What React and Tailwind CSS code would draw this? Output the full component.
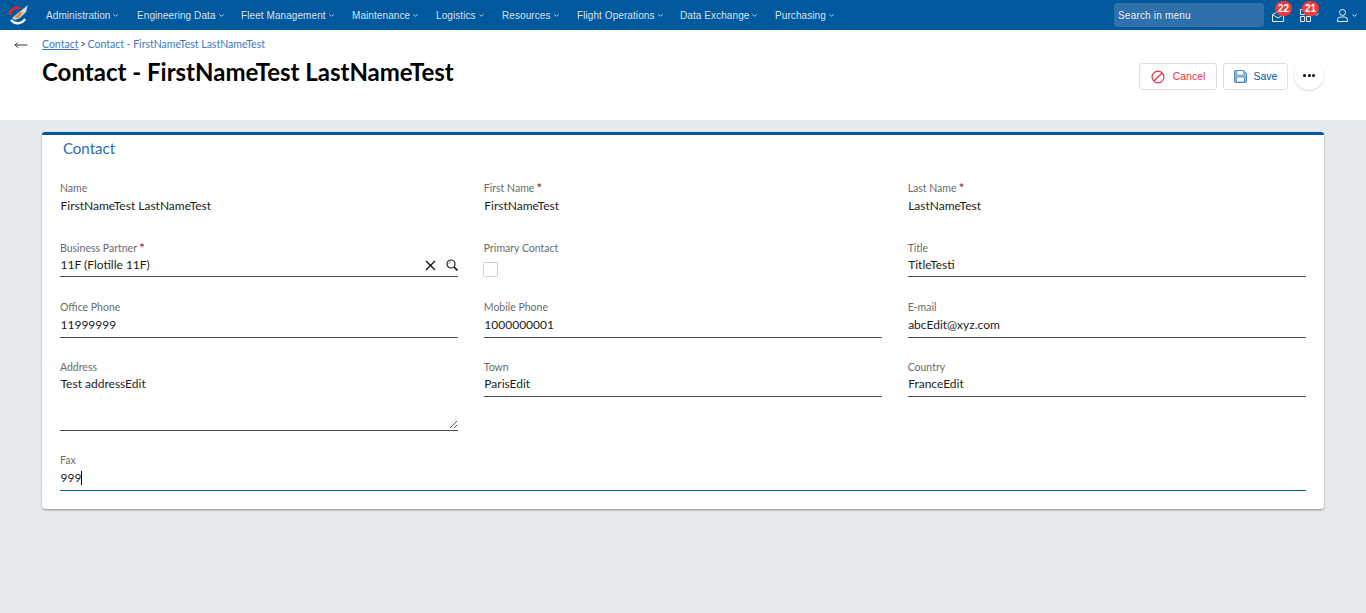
import React from "react";
import { ChevronDown, MoveLeft } from "lucide-react";

const menus = [
  ["Administration", "w-[91px]"],
  ["Engineering Data", "w-[104px]"],
  ["Fleet Management", "w-[111px]"],
  ["Maintenance", "w-[84px]"],
  ["Logistics", "w-[66px]"],
  ["Resources", "w-[75px]"],
  ["Flight Operations", "w-[103px]"],
  ["Data Exchange", "w-[95px]"],
  ["Purchasing", "w-[70px]"],
];

function Logo() {
  return (
    <svg width="20" height="20" viewBox="0 0 20 20" className="shrink-0">
      <path d="M3 15a8.5 8.5 0 0 0 14-1" fill="none" stroke="#ffffff" strokeWidth="2.4" />
      <path d="M1.5 10a8.5 8 0 0 1 11-7" fill="none" stroke="#e3242b" strokeWidth="2.6" />
      <path d="M4 13L15 4l5-4-2 7-6 6-5 2z" fill="#d5d9de" />
      <path d="M6 13l6-6 3 0-4 6z" fill="#e8843c" />
    </svg>
  );
}

function Field({ label, value, required, caret, focus, children, h = "h-[60px]", line = true, row = "mt-px h-[22px]" }) {
  return (
    <div className={`${h} flex flex-col`}>
      <div className="h-[14px] text-[10.5px] leading-[14px] text-[#6b6b6b] flex">
        {label}
        {required && <span className="text-[#a3222f] text-[14px] leading-[14px] ml-[2px]">*</span>}
      </div>
      {children ? (
        children
      ) : (
        <div
          className={`${row} flex items-start leading-[20px] text-[12px] text-[#1c1c1c] pl-[0.5px] ${
            line ? "border-b" : ""
          } ${focus ? "border-b-[#005f9e]" : "border-b-[#4c4c4c]"}`}
        >
          {value}
          {caret && <span className="w-px h-[14px] bg-black mt-[3px]" />}
        </div>
      )}
    </div>
  );
}

export default function App() {
  return (
    <div className="min-h-[613px] bg-[#e6eaed] font-['Lato',sans-serif]">
      <div className="h-[30px] bg-[#00589d] flex items-center pl-[8px] text-[#d4e3f0] font-['Liberation_Sans',sans-serif]">
        <Logo />
        <div className="flex ml-[18px]">
          {menus.map(([m, w]) => (
            <div key={m} className={`${w} flex items-center text-[10px] tracking-[0.08px] whitespace-nowrap`}>
              {m}
              <ChevronDown size={7} strokeWidth={3} className="ml-[2px]" />
            </div>
          ))}
        </div>
        <div className="ml-auto flex items-center">
          <div className="w-[150px] h-[24px] rounded-[3px] bg-[#2f70aa] text-[10px] tracking-[0.2px] text-[#e6eef6] flex items-center pl-[4px]">
            Search in menu
          </div>
          <div className="relative ml-[8px] w-[14px] h-[30px] flex items-center">
            <svg width="12" height="11" viewBox="0 0 12 11" fill="none" stroke="white" strokeWidth="0.9" className="mt-[3px]">
              <path d="M.5 3.5V10.5H11.5V3.5L6 .5zM.5 3.5L6 7l5.5-3.5" />
            </svg>
            <span className="absolute left-[3px] top-px w-[17px] h-[15px] rounded-full bg-[#ee3a3a] text-white text-[10px] font-bold flex items-center justify-center">
              22
            </span>
          </div>
          <div className="relative ml-[14px] w-[22px] h-[30px] flex items-center">
            <svg width="11" height="13" viewBox="0 0 11 13" fill="none" stroke="white" strokeWidth="0.9" className="mt-[1px]">
              <path d="M.5.5h4v5h-4zM6.5.5h4v5h-4zM.5 7.5h4v5h-4zM6.5 7.5h4v5h-4z" />
            </svg>
            <ChevronDown size={7} strokeWidth={3} className="text-white mt-[-2px] ml-[2px]" />
            <span className="absolute left-[2px] top-px w-[17px] h-[15px] rounded-full bg-[#ee3a3a] text-white text-[10px] font-bold flex items-center justify-center">
              21
            </span>
          </div>
          <div className="ml-[15px] mr-[8px] flex items-center text-white">
            <svg width="11" height="13" viewBox="0 0 11 13" fill="none" stroke="white" strokeWidth="0.9">
              <circle cx="5.5" cy="3.5" r="3" />
              <path d="M.5 12.5V11a3 3 0 0 1 3-3h4a3 3 0 0 1 3 3v1.5z" />
            </svg>
            <ChevronDown size={7} strokeWidth={3} className="ml-[3px]" />
          </div>
        </div>
      </div>

      <div className="h-[90px] bg-white flex">
        <div className="w-[42px] pl-[14px] pt-[8px] text-[#222]">
          <MoveLeft size={14} strokeWidth={1.6} />
        </div>
        <div className="flex-1">
          <div className="mt-[8px] text-[10.5px] leading-[13px] text-[#3b78c4]">
            <span className="underline">Contact</span>
            <span className="text-[#555] mx-[1.5px]">&gt;</span>
            Contact - FirstNameTest LastNameTest
          </div>
          <h1 className="mt-[5px] text-[24px] leading-[32px] font-bold text-black">Contact - FirstNameTest LastNameTest</h1>
        </div>
        <div className="flex items-start pt-[33px] pr-[42px]">
          <button className="w-[78px] h-[27px] border border-[#dddddd] rounded-[3px] flex items-center justify-center text-[10.5px] text-[#f0333f] font-['Liberation_Sans',sans-serif]">
            <svg width="14" height="14" viewBox="0 0 14 14" fill="none" stroke="#f0333f" strokeWidth="1.2" className="mr-[8px]">
              <circle cx="7" cy="7" r="5.9" />
              <path d="M3 11L11 3" />
            </svg>
            Cancel
          </button>
          <button className="ml-[6px] w-[65px] h-[27px] border border-[#dddddd] rounded-[3px] flex items-center justify-center text-[10.5px] text-[#00589d] font-['Liberation_Sans',sans-serif]">
            <svg width="13" height="13" viewBox="0 0 13 13" className="mr-[7px]">
              <path d="M1.5.5h8l3 3v8a1 1 0 0 1-1 1h-10a1 1 0 0 1-1-1v-10a1 1 0 0 1 1-1z" fill="#8fb4d8" stroke="#4a88c0" strokeWidth="1" />
              <rect x="3.5" y="1" width="5.5" height="3.5" fill="#ffffff" />
              <path d="M2.5 12v-3.5a2 1.5 0 0 1 2-1.5h4a2 1.5 0 0 1 2 1.5V12z" fill="#ffffff" stroke="#4a88c0" strokeWidth=".8" />
            </svg>
            Save
          </button>
          <button className="ml-[6px] mt-[-3px] w-[30px] h-[30px] rounded-full bg-white shadow-[0_1px_2px_rgba(0,0,0,0.18)] flex items-center justify-center gap-[1.5px]">
            <span className="w-[3px] h-[3px] rounded-full bg-black" />
            <span className="w-[3px] h-[3px] rounded-full bg-black" />
            <span className="w-[3px] h-[3px] rounded-full bg-black" />
          </button>
        </div>
      </div>

      <div className="mx-[42px] mt-[12px] h-[377px] bg-white border-t-[3px] border-[#00589d] rounded-[3px] shadow-[0_1px_2px_rgba(0,0,0,0.4)] px-[18px]">
        <div className="pl-[3px] pt-[2px] text-[15px] leading-[22px] text-[#1f6fb2]">Contact</div>
        <div className="mt-[22px] grid grid-cols-3 gap-x-[25.5px]">
          <Field label="Name" value="FirstNameTest LastNameTest" line={false} />
          <Field label="First Name" value="FirstNameTest" required line={false} />
          <Field label="Last Name" value="LastNameTest" required line={false} />

          <Field label="Business Partner" required h="h-[59px]">
            <div className="h-[22px] border-b border-[#4c4c4c] flex items-start pl-[0.5px] leading-[20px] text-[12px] text-[#1c1c1c]">
              11F (Flotille 11F)
              <svg width="11" height="11" viewBox="0 0 11 11" fill="none" stroke="#111" strokeWidth="1.4" className="ml-auto mt-[5px]">
                <path d="M1 1l9 9M10 1l-9 9" />
              </svg>
              <svg width="12" height="12" viewBox="0 0 12 12" fill="none" className="ml-[10px] mt-[4px]">
                <circle cx="5" cy="5" r="4" stroke="#222" strokeWidth="1.2" />
                <path d="M8 8l3.5 3.5" stroke="#111" strokeWidth="1.6" />
                <path d="M3 5a2 2 0 0 1 2-2" stroke="#777" strokeWidth=".8" />
              </svg>
            </div>
          </Field>
          <Field label="Primary Contact" h="h-[59px]">
            <div className="mt-[7px] -ml-px w-[15px] h-[15px] border border-[#cfcfcf] rounded-[2px] bg-white" />
          </Field>
          <Field label="Title" value="TitleTesti" h="h-[59px]" row="h-[22px]" />

          <Field label="Office Phone" value="11999999" row="mt-px h-[23px]" />
          <Field label="Mobile Phone" value="1000000001" row="mt-px h-[23px]" />
          <Field label="E-mail" value="abcEdit@xyz.com" row="mt-px h-[23px]" />

          <Field label="Address" h="h-[93px]">
            <div className="relative mt-px h-[56px] border-b border-[#4c4c4c] pl-[0.5px] leading-[18px] text-[12px] text-[#1c1c1c]">
              Test addressEdit
              <svg width="9" height="9" viewBox="0 0 9 9" className="absolute right-0 bottom-[1px]">
                <path d="M1 8L8 1M5 8L8 5" stroke="#555" strokeWidth="1" />
              </svg>
            </div>
          </Field>
          <Field label="Town" value="ParisEdit" h="h-[93px]" row="h-[23px]" />
          <Field label="Country" value="FranceEdit" h="h-[93px]" row="h-[23px]" />

          <div className="col-span-3">
            <Field label="Fax" value="999" caret focus row="mt-px h-[23px]" />
          </div>
        </div>
      </div>
    </div>
  );
}
